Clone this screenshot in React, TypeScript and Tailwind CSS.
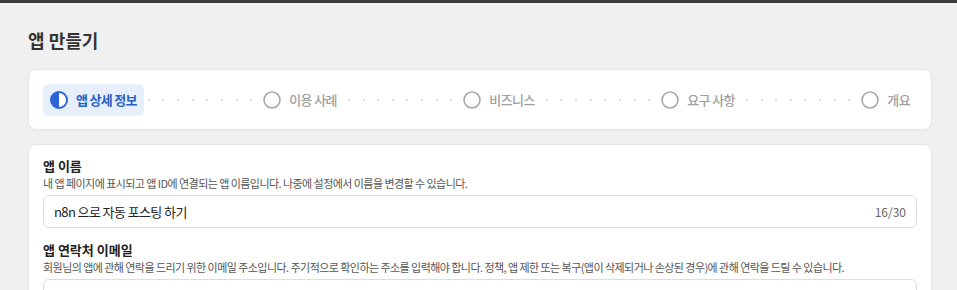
const steps = ['앱 상세 정보', '이용 사례', '비즈니스', '요구 사항', '개요'];

const Dots = () => (
  <div className="flex flex-1 items-center justify-between px-[4px]">
    {Array.from({ length: 8 }).map((_, i) => (
      <span key={i} className="h-[2px] w-[2px] rounded-full bg-[#d6d6d6]" />
    ))}
  </div>
);

const HalfCircle = () => (
  <svg width="18" height="18" viewBox="0 0 18 18" fill="none">
    <circle cx="9" cy="9" r="8" stroke="#2a64d6" strokeWidth="2" fill="#fff" />
    <path d="M9 1 A8 8 0 0 0 9 17 Z" fill="#2a64d6" />
  </svg>
);

const EmptyCircle = () => (
  <svg width="18" height="18" viewBox="0 0 18 18" fill="none">
    <circle cx="9" cy="9" r="8" stroke="#a8a8a8" strokeWidth="1.6" />
  </svg>
);

const Field = ({
  label,
  desc,
  value,
  counter,
}: {
  label: string;
  desc: string;
  value?: string;
  counter?: string;
}) => (
  <div>
    <div className="text-[13px] font-bold leading-[18px] text-[#222]">{label}</div>
    <div className="text-[11px] leading-[16px] tracking-[-0.55px] text-[#555]">{desc}</div>
    <div className="mt-[4px] flex h-[33px] items-center justify-between rounded-[6px] border border-[#dcdcdc] px-[10px]">
      <span className="text-[13px] tracking-[-0.6px] text-[#222]">{value}</span>
      {counter && <span className="text-[12px] text-[#666]">{counter}</span>}
    </div>
  </div>
);

export default function App() {
  return (
    <div className="min-h-screen bg-[#f0f0f0] font-['Noto_Sans_CJK_KR','Noto_Sans',sans-serif]">
      <div className="h-[3px] bg-[#3d3d3d]" />
      <div className="px-[28px] pt-[23px] pr-[25px]">
        <h1 className="text-[18px] font-bold leading-[28px] text-[#333]">앱 만들기</h1>

        <div className="mt-[15px] flex items-center rounded-[8px] border border-[#e6e6e6] bg-white px-[14px] pt-[14px] pb-[13px] shadow-[0_1px_2px_rgba(0,0,0,0.04)]">
          {steps.map((s, i) => (
            <div key={s} className="contents">
              {i > 0 && <Dots />}
              <div
                className={
                  i === 0
                    ? 'flex h-[32px] items-center gap-[8px] rounded-[6px] bg-[#e7effc] px-[7px]'
                    : 'flex h-[32px] items-center gap-[8px] px-[7px]'
                }
              >
                {i === 0 ? <HalfCircle /> : <EmptyCircle />}
                <span
                  className={
                    i === 0
                      ? 'text-[13px] font-bold tracking-[-0.7px] text-[#2a5fc4]'
                      : 'text-[13px] font-medium tracking-[-0.6px] text-[#a0a0a0]'
                  }
                >
                  {s}
                </span>
              </div>
            </div>
          ))}
        </div>

        <div className="mt-[14px] flex flex-col gap-[13px] rounded-[8px] border border-[#e6e6e6] bg-white px-[14px] pt-[12px] pb-[20px] shadow-[0_1px_2px_rgba(0,0,0,0.04)]">
          <Field
            label="앱 이름"
            desc="내 앱 페이지에 표시되고 앱 ID에 연결되는 앱 이름입니다. 나중에 설정에서 이름을 변경할 수 있습니다."
            value="n8n 으로 자동 포스팅 하기"
            counter="16/30"
          />
          <Field
            label="앱 연락처 이메일"
            desc="회원님의 앱에 관해 연락을 드리기 위한 이메일 주소입니다. 주기적으로 확인하는 주소를 입력해야 합니다. 정책, 앱 제한 또는 복구(앱이 삭제되거나 손상된 경우)에 관해 연락을 드릴 수 있습니다."
            value=""
          />
        </div>
      </div>
    </div>
  );
}
